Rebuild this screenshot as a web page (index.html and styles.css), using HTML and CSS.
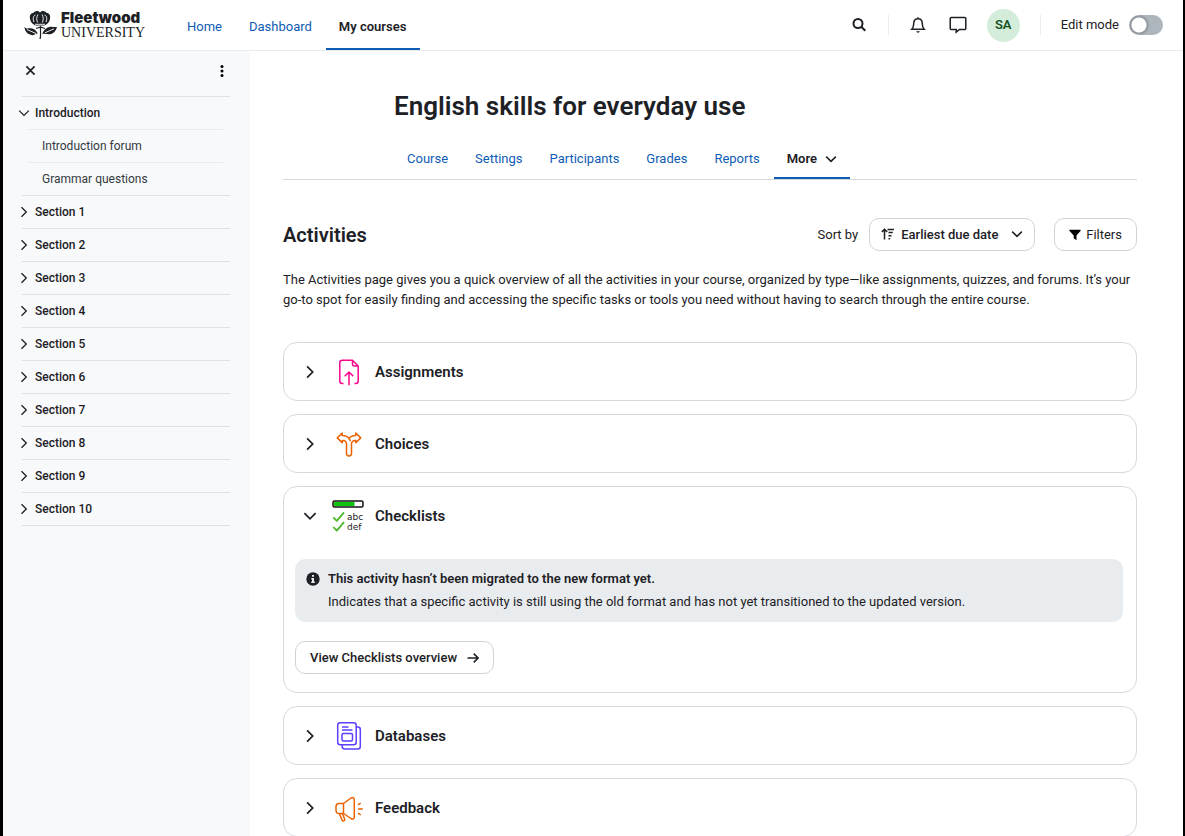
FILE: index.html
```html
<!DOCTYPE html>
<html lang="en">
<head>
    <meta charset="UTF-8">
    <meta name="viewport" content="width=device-width, initial-scale=1.0">
    <title>English skills for everyday use</title>
    <link rel="stylesheet" href="styles.css">
</head>
<body>

    <!-- Shared icons -->
    <svg class="sprite" aria-hidden="true">
        <symbol id="chevron-right" viewBox="0 0 12 12"><path d="M3.5 1.2 8.3 6 3.5 10.8" /></symbol>
        <symbol id="chevron-down" viewBox="0 0 12 12"><path d="M1.2 3.6 6 8.4l4.800-4.800" /></symbol>
    </svg>

    <!-- Top bar -->
    <header class="topbar">
        <a class="brand" href="#">
            <svg class="brand-mark" viewBox="0 0 34 30" aria-hidden="true">
                <path d="M16 2.500C13.500 0 10.800 1.200 9.600 2.800 6.500 3 5.300 6 6 8.500c.3 3.300 2.700 6.300 6.200 7h7.600c3.500-.7 5.900-3.700 6.200-7 .7-2.500-.5-5.500-3.600-5.700C21.200 1.200 18.500 0 16 2.500z" />
                <path class="brand-cut" d="M11.500 5C8.800 6 8.800 9 10 12M14 4.500c-1.600 2.500-1.600 5.500-.3 8M18 4.500c1.600 2.500 1.600 5.500.3 8M20.500 5c2.700 1 2.700 4 1.500 7M11 14.300h10" />
                <path class="brand-stem" d="M16.500 16v5c0 3 .5 5-.5 8M12 18.500l4.500-1.500M21 18.500l-4.500-1.500" />
                <path d="M.5 16.500c.8 2.500 3 2 4.500 1.800 3-.3 5.500.3 7.500 3.200l1.500 2.200c-2-.7-3.500 2.300-6.500 1.300C3.500 24 .5 21.500.5 16.500z" />
                <path d="M33 17c-3 .5-6-1-9.500.5-2.500 1.300-4 3.500-5.300 6.300 3.500-.3 6 1 9 .2 3-.9 4.800-3.500 5.800-7z" />
                <path class="brand-cut" d="M3 19.500 12 23.500M30 18.800l-9 4" />
            </svg>
            <span class="brand-text">
                <span class="brand-name">Fleetwood</span>
                <span class="brand-sub">UNIVERSITY</span>
            </span>
        </a>
        <nav class="primary-nav" aria-label="Site">
            <a href="#">Home</a>
            <a href="#">Dashboard</a>
            <a class="active" href="#" aria-current="page">My courses</a>
        </nav>
        <div class="tools">
            <button class="icon-btn" type="button" aria-label="Search">
                <svg viewBox="0 0 18 18" class="icon heavy"><circle cx="8" cy="7.500" r="4.500" /><path d="m11.300 10.800 4 4" /></svg>
            </button>
            <span class="divider"></span>
            <button class="icon-btn bell" type="button" aria-label="Notifications">
                <svg viewBox="0 0 18 18" class="icon"><path d="M9 1.200v1.600M2.800 13.300h12.400c-1.500-1.600-1.900-2.800-1.900-5.500 0-3-1.700-5-4.300-5s-4.300 2-4.300 5c0 2.700-.4 3.900-1.900 5.500z" /><path class="solid" d="M7.200 15.300h3.600c-.3 1.900-3.300 1.900-3.600 0z" /></svg>
            </button>
            <button class="icon-btn" type="button" aria-label="Messages">
                <svg viewBox="0 0 18 18" class="icon"><path d="M2.200 1.500h13.600q1 0 1 1v10q0 1-1 1H10.500L7.200 16.200v-2.700h-5q-1 0-1-1v-10q0-1 1-1z" /></svg>
            </button>
            <button class="avatar" type="button">SA</button>
            <span class="divider"></span>
            <label class="edit-mode">Edit mode
                <input class="switch" type="checkbox" role="switch">
            </label>
        </div>
    </header>

    <div class="layout">
        <!-- Course index -->
        <aside class="sidebar">
            <div class="sidebar-top">
                <button type="button" aria-label="Close course index">
                    <svg viewBox="0 0 10 10" class="icon close"><path d="m1.300 1.300 7.400 7.400M8.700 1.300 1.300 8.700" /></svg>
                </button>
                <button type="button" aria-label="Options">
                    <svg viewBox="0 0 4 12" class="dots"><circle cx="2" cy="1.600" r="1.500" /><circle cx="2" cy="6" r="1.500" /><circle cx="2" cy="10.400" r="1.500" /></svg>
                </button>
            </div>
            <ul class="course-index">
                <li>
                    <button class="section" type="button" aria-expanded="true"><svg><use href="#chevron-down" /></svg>Introduction</button>
                    <ul class="section-items">
                        <li><a href="#">Introduction forum</a></li>
                        <li><a href="#">Grammar questions</a></li>
                    </ul>
                </li>
                <li><button class="section" type="button" aria-expanded="false"><svg><use href="#chevron-right" /></svg>Section 1</button></li>
                <li><button class="section" type="button" aria-expanded="false"><svg><use href="#chevron-right" /></svg>Section 2</button></li>
                <li><button class="section" type="button" aria-expanded="false"><svg><use href="#chevron-right" /></svg>Section 3</button></li>
                <li><button class="section" type="button" aria-expanded="false"><svg><use href="#chevron-right" /></svg>Section 4</button></li>
                <li><button class="section" type="button" aria-expanded="false"><svg><use href="#chevron-right" /></svg>Section 5</button></li>
                <li><button class="section" type="button" aria-expanded="false"><svg><use href="#chevron-right" /></svg>Section 6</button></li>
                <li><button class="section" type="button" aria-expanded="false"><svg><use href="#chevron-right" /></svg>Section 7</button></li>
                <li><button class="section" type="button" aria-expanded="false"><svg><use href="#chevron-right" /></svg>Section 8</button></li>
                <li><button class="section" type="button" aria-expanded="false"><svg><use href="#chevron-right" /></svg>Section 9</button></li>
                <li><button class="section" type="button" aria-expanded="false"><svg><use href="#chevron-right" /></svg>Section 10</button></li>
            </ul>
        </aside>

        <main class="content">
            <h1>English skills for everyday use</h1>
            <nav class="tabs" aria-label="Course">
                <a href="#">Course</a>
                <a href="#">Settings</a>
                <a href="#">Participants</a>
                <a href="#">Grades</a>
                <a href="#">Reports</a>
                <button class="active" type="button" aria-haspopup="true">More <svg><use href="#chevron-down" /></svg></button>
            </nav>

            <div class="heading-row">
                <h2>Activities</h2>
                <label class="sort-label" for="sort">Sort by</label>
                <div class="sort">
                    <svg class="sort-icon icon" viewBox="0 0 14 12"><path d="M3.500 11.500V1.200M.8 3.900l2.700-2.700 2.700 2.700M6.500 1.500H13M7.500 4.600h4.300M7.500 7.700h3M7.500 10.700h1.600" /></svg>
                    <select id="sort">
                        <option>Earliest due date</option>
                    </select>
                    <svg class="sort-arrow"><use href="#chevron-down" /></svg>
                </div>
                <button class="btn filters" type="button">
                    <svg viewBox="0 0 12 12"><path d="M.6.800h10.800q.6.400.2 1L7.500 6.500v4.800L4.700 9.200V6.500L.4 1.800Q0 1.200.6.800z" /></svg>Filters
                </button>
            </div>
            <p class="intro">The Activities page gives you a quick overview of all the activities in your course, organized by type—like assignments, quizzes, and forums. It’s your go-to spot for easily finding and accessing the specific tasks or tools you need without having to search through the entire course.</p>

            <!-- Activity types -->
            <section class="card">
                <h3><button type="button" aria-expanded="false">
                    <svg class="chevron"><use href="#chevron-right" /></svg>
                    <svg class="type pink" viewBox="0 0 32 32"><path d="M10.500 27.500H9.300q-2.500 0-2.500-2.500V6.800q0-2.500 2.500-2.500H19.500L25.200 10v15q0 2.500-2.500 2.500h-1.200M19.500 4.300V8q0 2 2 2h3.700M16 29.200V16M11.700 20.300 16 16l4.300 4.300" /></svg>
                    Assignments
                </button></h3>
            </section>

            <section class="card">
                <h3><button type="button" aria-expanded="false">
                    <svg class="chevron"><use href="#chevron-right" /></svg>
                    <svg class="type orange" viewBox="0 0 32 32"><path d="M13.500 25.500V16c0-2.400-1.500-3.600-4.300-3.500v2.200L4.300 9.900 9.200 5v2.400c3 0 5.500.8 6.800 3.200 1.300-2.400 3.800-3.200 6.800-3.200V5l4.900 4.900-4.900 4.800v-2.200c-2.800-.1-4.300 1.100-4.300 3.500v9.500q0 2.400-2.500 2.400t-2.500-2.400z" /><path d="M16 10.600q1 1.200 1.400 2.600" /></svg>
                    Choices
                </button></h3>
            </section>

            <section class="card">
                <h3><button type="button" aria-expanded="true">
                    <svg class="chevron"><use href="#chevron-down" /></svg>
                    <svg class="type checklist" viewBox="0 0 32 32">
                        <rect x="0" y="1" width="30" height="6" rx="1.500" fill="#fff" stroke="#111" stroke-width="1.500" />
                        <path d="M1 2h20.500v4H1z" fill="#0fc40f" />
                        <path d="m.3 17.300 3.500 3.500L11 12.300M.3 27l3.500 3.700L11 22.200" fill="none" stroke="#4db82a" stroke-width="1.800" />
                        <text x="14" y="20">abc</text>
                        <text x="14" y="30">def</text>
                    </svg>
                    Checklists
                </button></h3>
                <div class="card-body">
                    <div class="notice">
                        <svg viewBox="0 0 14 14"><circle cx="7" cy="7" r="6.700" /><path class="info" d="M6 3h2v1.700H6zM5.300 6H8v3.500h.8V11H5.200V9.500H6V7.400h-.7z" /></svg>
                        <div>
                            <strong>This activity hasn’t been migrated to the new format yet.</strong>
                            <p>Indicates that a specific activity is still using the old format and has not yet transitioned to the updated version.</p>
                        </div>
                    </div>
                    <a class="btn" href="#">View Checklists overview <svg class="arrow icon" viewBox="0 0 12 12"><path d="M.5 6h10.500M6.700 1.600 11.100 6l-4.400 4.400" /></svg></a>
                </div>
            </section>

            <section class="card">
                <h3><button type="button" aria-expanded="false">
                    <svg class="chevron"><use href="#chevron-right" /></svg>
                    <svg class="type purple" viewBox="0 0 32 32"><rect x="4.700" y="2.700" width="18.500" height="22" rx="2.500" /><path d="M23.200 7h1.600q2.500 0 2.500 2.500v17q0 2.500-2.500 2.500H11.700q-2.500 0-2.500-2.500v-1.800M9 7h6.500M9 10h10.500" /><rect x="9" y="13.500" width="10.500" height="7.500" rx="1.500" /></svg>
                    Databases
                </button></h3>
            </section>

            <section class="card">
                <h3><button type="button" aria-expanded="false">
                    <svg class="chevron"><use href="#chevron-right" /></svg>
                    <svg class="type orange" viewBox="0 0 32 32"><path d="M10.500 11.500v10H6.300q-3.300 0-3.300-3.300v-3.400q0-3.300 3.300-3.300h4.200L18 6q1.200-.7 2.400-.2.900.5.900 1.700v17.600q0 1.300-.9 1.700-1.200.4-2.400-.3l-7.500-5M6.300 21.500l2.800 6.800q.7 1 1.800.6 1.100-.5.800-1.700L9.300 21.500M25 12.800l2.700-1.700M25 17h4.800M25 21.200l2.700 1.700" /></svg>
                    Feedback
                </button></h3>
            </section>
        </main>
    </div>

</body>
</html>
```
FILE: styles.css
```css
* {
    box-sizing: border-box;
}
body {
    margin: 0;
    height: 100vh;
    display: flex;
    flex-direction: column;
    overflow: hidden;
    border-left: 3px solid #000;
    border-right: 2px solid #000;
    font-family: Roboto, "Liberation Sans", sans-serif;
    font-size: 13px;
    line-height: 20px;
    color: #1d2125;
    background: #fff;
}
a {
    color: #0f5cb5;
    text-decoration: none;
}
h1, h2, h3, p, ul {
    margin: 0;
    padding: 0;
}
ul {
    list-style: none;
}
button, select {
    font: inherit;
    color: inherit;
    background: none;
    border: 0;
    padding: 0;
    cursor: pointer;
}
svg {
    flex: none;
    display: block;
    width: 12px;
    height: 12px;
}
svg use {
    fill: none;
    stroke: #1d2125;
    stroke-width: 1.5;
}
.sprite {
    display: none;
}
.icon {
    fill: none;
    stroke: #1d2125;
    stroke-width: 1.5;
}

/* Top bar */
.topbar {
    flex: none;
    display: flex;
    height: 51px;
    padding-right: 20px;
    border-bottom: 1px solid #e9ecef;
}
.brand {
    display: flex;
    align-items: center;
    gap: 3px;
    width: 171px;
    padding-left: 21px;
    color: #1d2125;
}
.brand-mark {
    width: 34px;
    height: 30px;
    fill: #1d2125;
}
.brand-cut {
    fill: none;
    stroke: #fff;
    stroke-width: 0.9;
}
.brand-stem {
    fill: none;
    stroke: #1d2125;
    stroke-width: 1.2;
}
.brand-text {
    display: flex;
    flex-direction: column;
}
.brand-name {
    font-family: Inter, sans-serif;
    font-size: 15px;
    font-weight: 900;
    line-height: 15px;
}
.brand-sub {
    font-family: "Liberation Serif", serif;
    font-size: 14px;
    line-height: 15px;
}
.primary-nav {
    display: flex;
}
.primary-nav a {
    padding: 17px 14px 0 13px;
}
.primary-nav .active {
    color: #1d2125;
    font-weight: 600;
    border-bottom: 2px solid #0f5cb5;
}
.tools {
    display: flex;
    align-items: center;
    gap: 20px;
    margin-left: auto;
}
.icon-btn svg {
    width: 18px;
    height: 18px;
}
.icon-btn .heavy {
    stroke-width: 2;
}
.bell {
    margin-right: 2px;
}
.solid {
    fill: #1d2125;
    stroke: none;
}
.divider {
    width: 1px;
    height: 20px;
    background: #e9ecef;
}
.avatar {
    width: 33px;
    height: 33px;
    border-radius: 50%;
    background: #d4edda;
    color: #145523;
    font-weight: 600;
}
.edit-mode {
    display: flex;
    align-items: center;
    gap: 10px;
}
.switch {
    appearance: none;
    width: 34px;
    height: 20px;
    margin: 0;
    border-radius: 10px;
    background: radial-gradient(circle at 10px 10px, #fff 7px, #8f959e 8px, #adb5bd 11px);
}

/* Course index */
.layout {
    flex: 1;
    display: flex;
    min-height: 0;
}
.sidebar {
    flex: none;
    width: 247px;
    padding: 0 20px 0 19px;
    background: #f8f9fb;
    font-size: 12px;
}
.sidebar-top {
    display: flex;
    justify-content: space-between;
    align-items: center;
    height: 46px;
    padding: 0 6px 6px 3px;
    border-bottom: 1px solid #dee2e6;
}
.close {
    width: 11px;
    height: 11px;
}
.dots {
    width: 4px;
}
.section {
    display: flex;
    align-items: center;
    gap: 5px;
    width: 100%;
    height: 33px;
    font-weight: 500;
    text-align: left;
    border-bottom: 1px solid #dee2e6;
}
.section svg {
    margin-left: -4px;
}
.section use {
    stroke-width: 1.3;
}
.section[aria-expanded="true"] {
    height: 32px;
    border-bottom: 0;
}
.section-items {
    padding: 0 7px 0 6px;
    border-bottom: 1px solid #dee2e6;
}
.section-items a {
    display: block;
    padding: 6px 14px;
    border-top: 1px solid #e9ecef;
    color: #343a40;
}

/* Course page */
.content {
    flex: 1;
    min-width: 0;
    padding: 37px 46px 0 33px;
    overflow: hidden;
}
h1 {
    padding-left: 111px;
    font-size: 26px;
    font-weight: 600;
    line-height: 36px;
}
.tabs {
    display: flex;
    gap: 1px;
    margin-top: 15px;
    padding-left: 111px;
    border-bottom: 1px solid #d5d9dd;
}
.tabs a, .tabs button {
    display: flex;
    align-items: center;
    height: 40px;
    padding: 2px 13px 0;
    border-bottom: 2px solid transparent;
}
.tabs .active {
    gap: 8px;
    font-weight: 600;
    border-color: #0f5cb5;
}
.heading-row {
    display: flex;
    align-items: center;
    margin-top: 38px;
}
h2 {
    margin-right: auto;
    font-size: 20px;
    font-weight: 600;
}
.sort {
    position: relative;
    margin: 0 19px 0 11px;
}
.sort select {
    appearance: none;
    width: 166px;
    height: 33px;
    padding: 0 31px;
    border: 1px solid #ced4da;
    border-radius: 10px;
    font-weight: 500;
}
.sort-icon, .sort-arrow {
    position: absolute;
    top: 10px;
    pointer-events: none;
}
.sort-icon {
    left: 12px;
    width: 14px;
}
.sort-arrow {
    right: 12px;
}
.btn {
    display: inline-flex;
    align-items: center;
    gap: 10px;
    height: 33px;
    padding: 0 14px;
    border: 1px solid #ced4da;
    border-radius: 10px;
    color: #1d2125;
    font-weight: 500;
}
.filters {
    gap: 5px;
    font-weight: 400;
}
.intro {
    margin: 19px 0 32px;
}

/* Activity cards */
.card {
    margin-bottom: 13px;
    border: 1px solid #d5d9e0;
    border-radius: 14px;
}
h3 button {
    display: flex;
    align-items: center;
    width: 100%;
    height: 57px;
    padding-left: 19px;
    font-size: 15px;
    font-weight: 600;
    text-align: left;
}
.chevron {
    width: 14px;
    height: 14px;
}
.type {
    width: 32px;
    height: 32px;
    margin: 0 10px 0 16px;
    fill: none;
    stroke-width: 1.5;
    stroke-linejoin: round;
    overflow: visible;
}
.pink {
    stroke: #f7058c;
}
.orange {
    stroke: #eb6200;
}
.purple {
    stroke: #5b40ff;
}
.checklist text {
    font: 9px "DejaVu Sans", sans-serif;
    fill: #1d2125;
}
.card-body {
    padding: 15px 13px 18px 11px;
}
.notice {
    display: flex;
    gap: 8px;
    margin-bottom: 19px;
    padding: 10px 11px;
    border-radius: 10px;
    background: #e9ecef;
}
.notice svg {
    width: 14px;
    height: 14px;
    margin-top: 3px;
    fill: #1d2125;
}
.notice .info {
    fill: #e9ecef;
}
.notice strong {
    font-weight: 600;
}
.notice p {
    margin-top: 3px;
}
```
